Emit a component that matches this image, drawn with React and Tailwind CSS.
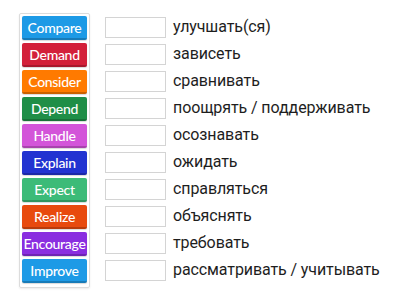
import React from "react";

const tiles = [
  ["Compare", "bg-[#1d9ae6]"],
  ["Demand", "bg-[#d3203a]"],
  ["Consider", "bg-[#ff7a00]"],
  ["Depend", "bg-[#1f8e47]"],
  ["Handle", "bg-[#d354d9]"],
  ["Explain", "bg-[#2233d1]"],
  ["Expect", "bg-[#3cbb78]"],
  ["Realize", "bg-[#e84a0e]"],
  ["Encourage", "bg-[#8a2ee0]"],
  ["Improve", "bg-[#1d9ae6]"],
];

const words = [
  "улучшать(ся)",
  "зависеть",
  "сравнивать",
  "поощрять / поддерживать",
  "осознавать",
  "ожидать",
  "справляться",
  "объяснять",
  "требовать",
  "рассматривать / учитывать",
];

export default function App() {
  return (
    <div className="w-[400px] h-[300px] bg-white flex items-start pl-[19px] pt-[13px]">
      <div className="flex flex-col gap-[3px] border border-[#dcdcdc] rounded-[2px] pt-[2px] pb-[4px] px-[2px] shadow-[0_1px_2px_rgba(0,0,0,0.08)]">
        {tiles.map(([t, c]) => (
          <div
            key={t}
            className={`${c} w-[65px] h-[24px] rounded-[2px] flex items-center justify-center text-white text-[14px] font-medium tracking-[-0.3px] border-b-2 border-black/20 shadow-[0_1px_1px_rgba(0,0,0,0.15)]`}
            style={{ fontFamily: "Lato, sans-serif" }}
          >
            {t}
          </div>
        ))}
      </div>
      <div className="flex flex-col gap-[3px] ml-[15px] pt-[2px]">
        {words.map((w) => (
          <div key={w} className="flex items-center h-[24px] gap-[7px]">
            <div className="w-[61px] h-[21px] border border-[#d4d4d4] bg-white mt-[1px]" />
            <span
              className="text-[16px] text-[#1e1e1e] leading-none whitespace-nowrap tracking-[-0.1px]"
              style={{ fontFamily: "Roboto, sans-serif" }}
            >
              {w}
            </span>
          </div>
        ))}
      </div>
    </div>
  );
}
